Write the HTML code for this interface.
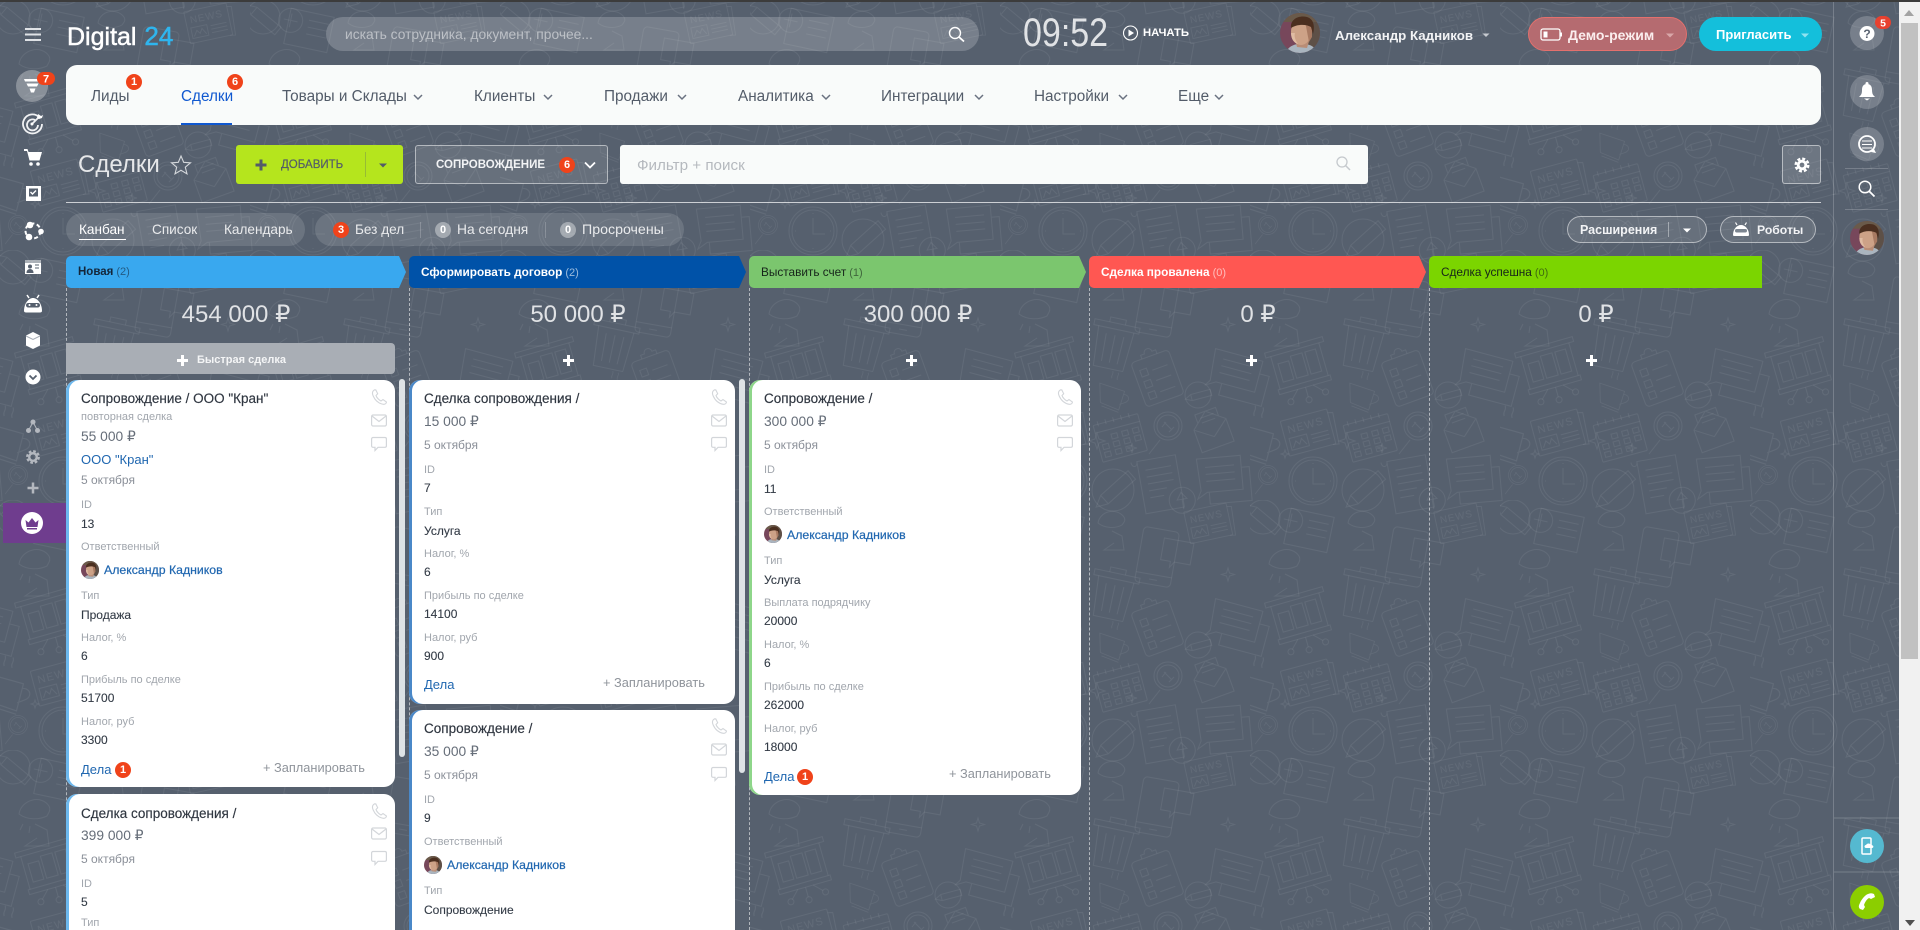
<!DOCTYPE html>
<html lang="ru">
<head>
<meta charset="utf-8">
<title>Сделки</title>
<style>
html,body{margin:0;padding:0;width:1920px;height:930px;overflow:hidden;background:#56606e}
body{position:relative;font-family:"Liberation Sans","DejaVu Sans",sans-serif;color:#fff}
.a,.t{position:absolute}
.t{white-space:nowrap;line-height:20px}
#bg{position:absolute;left:0;top:0}
#ic{position:absolute;left:0;top:0;pointer-events:none}
.badge{position:absolute;width:16px;height:16px;border-radius:50%;background:#f0431a;color:#fff;font-size:11px;font-weight:bold;line-height:16px;text-align:center}
.zero{position:absolute;width:16px;height:16px;border-radius:50%;background:rgba(255,255,255,.38);color:#fff;font-size:11px;font-weight:bold;line-height:16px;text-align:center}
.nav{font-size:15.3px;color:#535c69;top:87px}
.pill{position:absolute;background:rgba(255,255,255,.13);border-radius:17px;top:213px;height:33px}
.vt{font-size:13.6px;top:220px;color:rgba(255,255,255,.85)}
.oln{position:absolute;top:216px;height:25px;border:1px solid rgba(255,255,255,.5);background:rgba(255,255,255,.1);border-radius:14px}
.hd{position:absolute;top:256px;height:32px;border-radius:5px 0 0 5px;clip-path:polygon(0 0,calc(100% - 7px) 0,100% 50%,calc(100% - 7px) 100%,0 100%)}
.hd span{position:absolute;left:12px;top:6px;white-space:nowrap;line-height:20px;font-size:11.8px}
.hd i{font-style:normal;font-weight:normal;font-size:11px;opacity:.6;margin-left:3px}
.sum{position:absolute;top:298px;width:300px;text-align:center;font-size:24px;line-height:34px;color:rgba(255,255,255,.82)}
.dash{position:absolute;top:288px;bottom:0;width:0;border-left:1px dashed rgba(255,255,255,.55)}
.plus{position:absolute;width:11px;height:11px;top:355px;
 background:linear-gradient(#fff,#fff) center/11px 3px no-repeat,linear-gradient(#fff,#fff) center/3px 11px no-repeat}
.sb{position:absolute;width:6px;background:#dde2e5;border-radius:3px;top:379px}
.card{position:absolute;background:#fff;border-radius:11px;overflow:hidden}
.card .t{left:15px}
.ti{font-size:13.5px;color:#2f3640;-webkit-text-stroke:.15px #2f3640;margin-top:1px}
.pr{font-size:13.8px;color:#666e79}
.dt{font-size:12px;color:#8b9099}
.l{font-size:11px;color:#a1a6ad}
.v{font-size:12px;color:#333b46;-webkit-text-stroke:.1px #333b46}
.nm{font-size:12.3px;color:#2067b0;-webkit-text-stroke:.2px #2067b0}
.lnk{font-size:13px;color:#2067b0}
.pl{font-size:12.8px;color:#8f949b}
.cav{position:absolute;left:15px;width:18px;height:18px}
.ci{position:absolute;right:8px;width:16px;height:16px;overflow:visible}
.ci *{fill:none;stroke:#d3d6da;stroke-width:1.2}
</style>
</head>
<body>
<svg id="bg" width="1920" height="930" xmlns="http://www.w3.org/2000/svg">
<defs>
<g id="news"><rect x="-26" y="-18" width="48" height="36" rx="1"/><path d="M22-14l5 1-2 32-6-1"/><text x="-21" y="-4" font-size="11" letter-spacing="1" fill="#fff" fill-opacity=".065" stroke="none" font-family="Liberation Sans">NEWS</text><rect x="-22" y="1" width="18" height="12"/><path d="M-20 11l4-6 3 4 3-5 4 7M0 3h18M0 7h18M0 11h18"/></g>
<g id="pen"><path d="M-8 9l2-6L7-10l4 4L-2 7zM-6 3l4 4" vector-effect="non-scaling-stroke"/></g>
<g id="mag"><circle r="14"/><circle r="11"/><path d="M-8 14L-19 28"/><path d="M-4-4l8 8M-6 1l4-5M1 6l5-5"/></g>
<g id="cup"><path d="M-18-10L14-4 10 20-14 14zM13 0c8-1 10 7 3 10l-6 3M-12 18l22 5"/><path d="M-4-18c-2-4 2-5 0-9M3-17c-2-4 2-5 0-9"/></g>
<g id="tile" fill="none" stroke="#fff" stroke-opacity=".065" stroke-width="1">
<g transform="translate(63,231)"><circle r="24"/><circle r="21"/><path d="M0-13V3H12M0-18v1M0 18v-1M-18 0h1M18 0h-1"/></g>
<g transform="translate(113,95) rotate(12)"><rect x="-23" y="-22" width="46" height="6"/><path d="M-8-22v-5h16v5M-18-16l3 40h30l3-40M-9-10l1 28M0-10v28M9-10l-1 28"/></g>
<g transform="translate(50,118) rotate(-16)"><rect x="-30" y="-24" width="60" height="5"/><rect x="-27" y="15" width="54" height="5"/><path d="M-25-19v34M25-19v34"/><rect x="-20" y="-10" width="11" height="19"/><rect x="-6" y="-14" width="12" height="23"/><rect x="9" y="-14" width="11" height="23"/><path d="M-8 20l-8 8M0 20v10M8 20l8 8"/><circle cx="-18" cy="30" r="3"/><circle cx="0" cy="33" r="3"/><circle cx="18" cy="30" r="3"/></g>
<g transform="translate(157,127) rotate(-20)"><rect x="-20" y="-22" width="40" height="47" rx="4"/><path d="M-8-22v-4h4a4 4 0 0 1 8 0h4v4"/><rect x="-14" y="-12" width="7" height="7"/><rect x="-14" y="0" width="7" height="7"/><rect x="-14" y="12" width="7" height="7"/><path d="M-2-8h16M-2 3h16M-2 15h16"/></g>
<g transform="translate(237,123) rotate(15)"><path d="M-27-18H22V14H-18l-10 6 4-6zM22-5H32V26H-12V14"/><path d="M-17-10H14M-17-3H14M-17 4H14"/></g>
<g transform="translate(33,70)"><path d="M-14-6c2-14 22-20 30-8 2 4 0 6-2 10-8 4-20 4-28-2zM2 4l12 6 2 16H-8l12-8"/><path d="M-10 4l-3 6M-3 6l-1 7"/></g>
<g transform="translate(157,57) rotate(10)"><rect x="-18" y="-28" width="36" height="56" rx="4"/><path d="M-18 18H18M-4 23h8"/><path d="M4-20H34V2H18L14 8V2H4z"/></g>
<use href="#cup" transform="translate(113,143) rotate(8) scale(.8)"/>
<g transform="translate(198,145)"><circle r="13"/><use href="#pen" transform="scale(1.1) rotate(30)"/></g>
<g transform="translate(120,187) rotate(-15)"><rect x="-23" y="-18" width="46" height="38" rx="1"/><path d="M-23-10H23M-18-21v5M-10-21v5M-2-21v5M6-21v5M14-21v5"/><path d="M-8-5h6v5h-6zM3-5h6v5H3zM14-5h6v5h-6zM-19 3h6v5h-6zM-8 3h6v5h-6zM3 3h6v5H3zM14 3h6v5h-6zM-19 11h6v5h-6zM-8 11h6v5h-6zM3 11h6v5H3z"/></g>
<use href="#mag" transform="translate(168,176)"/>
<g transform="translate(212,180) rotate(-20)"><path d="M-17-6l17-14 17 14V18H-17zM-17-6L0 7 17-6M-11-11V-20H11V-11"/><path d="M-7-15H7M-7-10H7"/></g>
<use href="#cup" transform="translate(7,187) rotate(5) scale(1.15)"/>
<use href="#news" transform="translate(60,182) rotate(-15)"/>
<g transform="translate(165,233) rotate(-10)"><path d="M-24-26H15V27H-24zM-24-26c0 6-6 6-6 0M-17-16H9M-17-9H9M-17-2H9M-17 5H1M-17 12H-3"/><circle cx="14" cy="20" r="13"/><path d="M14 29V19h-5l5-7 5 7h-5"/></g>
<g transform="translate(222,227) rotate(-5)"><path d="M-24-20H20V14H-16L-26 20l4-8zM20-8H28V26H-14V14"/><path d="M-16-11H13M-16-4H13M-16 3H13"/></g>
<use href="#mag" transform="translate(18,225) scale(.68)"/>
<g transform="translate(113,240)"><circle r="21"/><use href="#pen" transform="scale(2) rotate(3)"/></g>
<use href="#news" transform="translate(210,23) rotate(-12) scale(.9)"/>
<g transform="translate(13,17)"><circle r="17"/><use href="#pen" transform="scale(1.7) rotate(85)"/></g>
<g transform="translate(57,30) rotate(12)"><rect x="-20" y="-18" width="44" height="36"/><circle cx="-18" cy="-6" r="12"/><path d="M-18-13v14M-25-6h14M0-10h20M0-3h20M0 4h20"/></g>
<g transform="translate(110,27)"><path d="M-12-4c2-12 18-16 26-6 2 4 0 5-2 8-7 4-18 3-24-2zM2 4l10 5 2 14H-6l10-7"/></g>
<path d="M97 183l2 6 6 2-6 2-2 6-2-6-6-2 6-2zM228 68l1.500 5 5 1.500-5 1.500-1.500 5-1.500-5-5-1.500 5-1.500zM132 193l1 4 4 1-4 1-1 4-1-4-4-1 4-1zM35 200l1 3 3 1-3 1-1 3-1-3-3-1 3-1z"/>
</g>
<pattern id="p" patternUnits="userSpaceOnUse" width="250" height="250">
<use href="#tile"/><use href="#tile" x="-250"/><use href="#tile" y="-250"/><use href="#tile" x="-250" y="-250"/>
</pattern>
<symbol id="av" viewBox="0 0 40 40">
<clipPath id="avc"><circle cx="20" cy="20" r="20"/></clipPath>
<g clip-path="url(#avc)">
<rect width="40" height="40" fill="#77475b"/><rect x="26" width="14" height="40" fill="#5d5047"/><rect width="40" height="9" fill="#6a5a4a"/>
<path d="M6 40c2-8 12-10 18-9 7 0 12 4 13 9z" fill="#aab5bf"/>
<path d="M15 26l2 8 10 1 3-10z" fill="#b98d76"/>
<ellipse cx="21" cy="19" rx="10" ry="13" fill="#cda287"/>
<path d="M11 20c0 6 3 10 7 11-3-4-4-8-3-11z" fill="#e0bca3"/>
<path d="M25 8l7 2v14l-3 5z" fill="#a87a62"/>
<path d="M11 15C10 6 19 2 27 4c7 2 8 10 6 17l-2-7c-5-3-14-3-20 1z" fill="#4b2f20"/>
</g>
</symbol>
<symbol id="phone" viewBox="0 0 16 16"><path d="M3.500.8C1.500 2 .8 4 2.200 7c2 4.500 5.500 7.500 10 8.300 1.700.2 3-.8 3.300-2.200l-3.500-2.600-2 1.500C8 11 5.500 8.500 5 6.500l1.700-1.700L4.800.9z" fill="none" stroke="#d3d6da" stroke-width="1.100"/></symbol>
<symbol id="mail" viewBox="0 0 16 16"><rect x=".6" y="2" width="14.800" height="11" rx="1.500" fill="none" stroke="#d3d6da" stroke-width="1.200"/><path d="M1 3l7 5.500L15 3" fill="none" stroke="#d3d6da" stroke-width="1.200"/></symbol>
<symbol id="chat" viewBox="0 0 16 16"><path d="M2 1.500h12c.8 0 1.400.6 1.400 1.400v7c0 .8-.6 1.400-1.400 1.400H7l-3 3.200v-3.200H2C1.200 11.300.6 10.700.6 9.900v-7C.6 2.100 1.200 1.500 2 1.500z" fill="none" stroke="#d3d6da" stroke-width="1.200"/></symbol>
</defs>
<rect width="1920" height="930" fill="#56606e"/>
<rect width="1920" height="930" fill="url(#p)"/>
<rect width="1920" height="2" fill="#3c3c3c"/>
<path d="M1833.500 2V930M1834 818H1899M1834 872H1899M1845 168.500H1888M1845 209.500H1888" stroke="#fff" stroke-opacity=".2" fill="none"/>
</svg>

<!-- верхняя панель -->
<div class="t" style="left:67px;top:21px;font-size:25px;line-height:30px;-webkit-text-stroke:.5px #fff">Digital <span style="color:#2fb5ee;-webkit-text-stroke:.5px #2fb5ee;font-size:26px;margin-left:1px">24</span></div>
<div class="a" style="left:326px;top:17px;width:653px;height:34px;border-radius:17px;background:rgba(255,255,255,.2)"></div>
<div class="t" style="left:345px;top:25px;font-size:13.800px;color:rgba(255,255,255,.5)">искать сотрудника, документ, прочее...</div>
<div class="t" style="left:1023px;top:10px;font-size:40px;line-height:46px;transform:scaleX(.85);transform-origin:0 0;color:rgba(255,255,255,.82)">09:52</div>
<div class="t" style="left:1143px;top:23px;font-size:11.300px;font-weight:bold">НАЧАТЬ</div>
<div class="t" style="left:1335px;top:26px;font-size:13.300px;font-weight:bold;color:#f2f3f5">Александр Кадников</div>
<div class="a" style="left:1528px;top:17px;width:157px;height:32px;border:1px solid #e4706d;border-radius:17px;background:#b56b70"></div>
<div class="t" style="left:1568px;top:25px;font-size:14px;font-weight:bold;color:#fbeeee">Демо-режим</div>
<div class="a" style="left:1699px;top:17px;width:123px;height:34px;border-radius:17px;background:#14bfdb"></div>
<div class="t" style="left:1716px;top:25px;font-size:13px;font-weight:bold">Пригласить</div>

<!-- меню -->
<div class="a" style="left:66px;top:65px;width:1755px;height:60px;background:#f9fbfa;border-radius:11px"></div>
<div class="t nav" style="left:91px">Лиды</div>
<div class="t nav" style="left:181px;color:#1058d0">Сделки</div>
<div class="a" style="left:181px;top:123px;width:51px;height:2px;background:#1058d0"></div>
<div class="t nav" style="left:282px">Товары и Склады</div>
<div class="t nav" style="left:474px">Клиенты</div>
<div class="t nav" style="left:604px">Продажи</div>
<div class="t nav" style="left:738px">Аналитика</div>
<div class="t nav" style="left:881px">Интеграции</div>
<div class="t nav" style="left:1034px">Настройки</div>
<div class="t nav" style="left:1178px">Еще</div>
<div class="badge" style="left:126px;top:74px">1</div>
<div class="badge" style="left:227px;top:74px">6</div>

<!-- заголовок -->
<div class="t" style="left:78px;top:150px;font-size:24px;line-height:30px;color:rgba(255,255,255,.85)">Сделки</div>
<div class="a" style="left:236px;top:145px;width:167px;height:39px;background:#b5e51d;border-radius:3px"></div>
<div class="a" style="left:365px;top:152px;width:1px;height:25px;background:rgba(83,92,105,.3)"></div>
<div class="t" style="left:281px;top:155px;font-size:11.500px;color:#535c69;-webkit-text-stroke:.2px #535c69">ДОБАВИТЬ</div>
<div class="a" style="left:415px;top:145px;width:191px;height:37px;border:1px solid rgba(255,255,255,.5);background:rgba(255,255,255,.1);border-radius:3px"></div>
<div class="t" style="left:436px;top:155px;font-size:11.500px;font-weight:bold;color:#f2f3f5">СОПРОВОЖДЕНИЕ</div>
<div class="badge" style="left:559px;top:157px">6</div>
<div class="a" style="left:620px;top:145px;width:748px;height:39px;background:#f9fbfa;border-radius:3px"></div>
<div class="t" style="left:637px;top:156px;font-size:15.200px;color:#b5b9be">Фильтр + поиск</div>
<div class="a" style="left:1782px;top:145px;width:37px;height:37px;border:1px solid rgba(255,255,255,.5);background:rgba(255,255,255,.14);border-radius:3px"></div>
<div class="a" style="left:66px;top:202px;width:1755px;height:1px;background:rgba(255,255,255,.7)"></div>

<!-- вид и счетчики -->
<div class="pill" style="left:66px;width:239px"></div>
<div class="t vt" style="left:79px;color:#fff">Канбан</div>
<div class="a" style="left:79px;top:239px;width:47px;height:1px;background:#fff"></div>
<div class="t vt" style="left:152px">Список</div>
<div class="t vt" style="left:224px">Календарь</div>
<div class="pill" style="left:315px;width:369px"></div>
<div class="badge" style="left:333px;top:222px">3</div>
<div class="t vt" style="left:355px">Без дел</div>
<div class="a" style="left:420px;top:222px;width:1px;height:16px;background:rgba(255,255,255,.2)"></div>
<div class="zero" style="left:435px;top:222px">0</div>
<div class="t vt" style="left:457px;font-size:13.800px">На сегодня</div>
<div class="a" style="left:545px;top:222px;width:1px;height:16px;background:rgba(255,255,255,.2)"></div>
<div class="zero" style="left:560px;top:222px">0</div>
<div class="t vt" style="left:582px;font-size:14.200px">Просрочены</div>
<div class="oln" style="left:1567px;width:138px"></div>
<div class="t" style="left:1580px;top:220px;font-size:12.500px;font-weight:bold;color:#f2f3f5">Расширения</div>
<div class="a" style="left:1668px;top:222px;width:1px;height:15px;background:rgba(255,255,255,.4)"></div>
<div class="oln" style="left:1720px;width:94px"></div>
<div class="t" style="left:1757px;top:220px;font-size:12.200px;font-weight:bold;color:#f2f3f5">Роботы</div>

<!-- канбан -->
<div class="dash" style="left:66px"></div><div class="dash" style="left:409px"></div><div class="dash" style="left:749px"></div><div class="dash" style="left:1089px"></div><div class="dash" style="left:1429px"></div>
<div class="hd" style="left:66px;width:340px;background:#39a8ef"><span style="color:#14263a;font-weight:bold;font-size:11.500px">Новая<i>(2)</i></span></div>
<div class="hd" style="left:409px;width:337px;background:#0052a8"><span style="color:#fff;font-weight:bold">Сформировать договор<i>(2)</i></span></div>
<div class="hd" style="left:749px;width:337px;background:#7bc66e"><span style="color:#16241a">Выставить счет<i>(1)</i></span></div>
<div class="hd" style="left:1089px;width:337px;background:#ff5752"><span style="color:#fff;font-weight:bold">Сделка провалена<i>(0)</i></span></div>
<div class="hd" style="left:1429px;width:333px;background:#7bd500;clip-path:none;border-radius:5px 0 0 5px"><span style="color:#16241a">Сделка успешна<i>(0)</i></span></div>
<div class="sum" style="left:86px">454 000 ₽</div>
<div class="sum" style="left:428px">50 000 ₽</div>
<div class="sum" style="left:768px">300 000 ₽</div>
<div class="sum" style="left:1108px">0 ₽</div>
<div class="sum" style="left:1446px">0 ₽</div>
<div class="a" style="left:66px;top:343px;width:329px;height:31px;background:#a9aeb5;border-radius:0 4px 4px 0"></div>
<div class="plus" style="left:177px;top:355px"></div>
<div class="t" style="left:197px;top:350px;font-size:11px;font-weight:bold;color:#f4f5f6">Быстрая сделка</div>
<div class="plus" style="left:563px"></div><div class="plus" style="left:906px"></div><div class="plus" style="left:1246px"></div><div class="plus" style="left:1586px"></div>
<div class="sb" style="left:399px;height:378px"></div>
<div class="sb" style="left:739px;height:394px"></div>

<!-- колонка 1 -->
<div class="card" style="left:66px;top:380px;width:329px;height:407px;box-shadow:inset 3px 0 0 #6cb8ee">
<svg class="ci" style="top:9px"><use href="#phone"/></svg><svg class="ci" style="top:33px"><use href="#mail"/></svg><svg class="ci" style="top:56px"><use href="#chat"/></svg>
<div class="t ti" style="top:8px">Сопровождение / ООО "Кран"</div>
<div class="t l" style="top:27px">повторная сделка</div>
<div class="t pr" style="top:47px">55 000 ₽</div>
<div class="t lnk" style="top:70px">ООО "Кран"</div>
<div class="t dt" style="top:90px">5 октября</div>
<div class="t l" style="top:115px">ID</div><div class="t v" style="top:134px">13</div>
<div class="t l" style="top:157px">Ответственный</div>
<svg class="cav" style="top:181px"><use href="#av"/></svg><div class="t nm" style="left:38px;top:180px">Александр Кадников</div>
<div class="t l" style="top:206px">Тип</div><div class="t v" style="top:225px">Продажа</div>
<div class="t l" style="top:248px">Налог, %</div><div class="t v" style="top:266px">6</div>
<div class="t l" style="top:290px">Прибыль по сделке</div><div class="t v" style="top:308px">51700</div>
<div class="t l" style="top:332px">Налог, руб</div><div class="t v" style="top:350px">3300</div>
<div class="t lnk" style="top:380px">Дела</div><div class="badge" style="left:49px;top:382px">1</div>
<div class="t pl" style="left:197px;top:378px">+ Запланировать</div>
</div>
<div class="card" style="left:66px;top:794px;width:329px;height:136px;border-radius:11px 11px 0 0;box-shadow:inset 3px 0 0 #6cb8ee">
<svg class="ci" style="top:9px"><use href="#phone"/></svg><svg class="ci" style="top:32px"><use href="#mail"/></svg><svg class="ci" style="top:56px"><use href="#chat"/></svg>
<div class="t ti" style="top:9px">Сделка сопровождения /</div>
<div class="t pr" style="top:32px">399 000 ₽</div>
<div class="t dt" style="top:55px">5 октября</div>
<div class="t l" style="top:80px">ID</div><div class="t v" style="top:98px">5</div>
<div class="t l" style="top:116px;margin-top:6px;line-height:14px">Тип</div>
</div>

<!-- колонка 2 -->
<div class="card" style="left:409px;top:380px;width:326px;height:324px;box-shadow:inset 3px 0 0 #4a88c8">
<svg class="ci" style="top:9px"><use href="#phone"/></svg><svg class="ci" style="top:33px"><use href="#mail"/></svg><svg class="ci" style="top:56px"><use href="#chat"/></svg>
<div class="t ti" style="top:8px">Сделка сопровождения /</div>
<div class="t pr" style="top:32px">15 000 ₽</div>
<div class="t dt" style="top:55px">5 октября</div>
<div class="t l" style="top:80px">ID</div><div class="t v" style="top:98px">7</div>
<div class="t l" style="top:122px">Тип</div><div class="t v" style="top:141px">Услуга</div>
<div class="t l" style="top:164px">Налог, %</div><div class="t v" style="top:182px">6</div>
<div class="t l" style="top:206px">Прибыль по сделке</div><div class="t v" style="top:224px">14100</div>
<div class="t l" style="top:248px">Налог, руб</div><div class="t v" style="top:266px">900</div>
<div class="t lnk" style="top:295px">Дела</div>
<div class="t pl" style="left:194px;top:293px">+ Запланировать</div>
</div>
<div class="card" style="left:409px;top:710px;width:326px;height:220px;border-radius:11px 11px 0 0;box-shadow:inset 3px 0 0 #4a88c8">
<svg class="ci" style="top:8px"><use href="#phone"/></svg><svg class="ci" style="top:32px"><use href="#mail"/></svg><svg class="ci" style="top:56px"><use href="#chat"/></svg>
<div class="t ti" style="top:8px">Сопровождение /</div>
<div class="t pr" style="top:32px">35 000 ₽</div>
<div class="t dt" style="top:55px">5 октября</div>
<div class="t l" style="top:80px">ID</div><div class="t v" style="top:98px">9</div>
<div class="t l" style="top:122px">Ответственный</div>
<svg class="cav" style="top:146px"><use href="#av"/></svg><div class="t nm" style="left:38px;top:145px">Александр Кадников</div>
<div class="t l" style="top:171px">Тип</div><div class="t v" style="top:190px">Сопровождение</div>
</div>

<!-- колонка 3 -->
<div class="card" style="left:749px;top:380px;width:332px;height:415px;box-shadow:inset 3px 0 0 #8ed68a">
<svg class="ci" style="top:9px"><use href="#phone"/></svg><svg class="ci" style="top:33px"><use href="#mail"/></svg><svg class="ci" style="top:56px"><use href="#chat"/></svg>
<div class="t ti" style="top:8px">Сопровождение /</div>
<div class="t pr" style="top:32px">300 000 ₽</div>
<div class="t dt" style="top:55px">5 октября</div>
<div class="t l" style="top:80px">ID</div><div class="t v" style="top:99px">11</div>
<div class="t l" style="top:122px">Ответственный</div>
<svg class="cav" style="top:145px"><use href="#av"/></svg><div class="t nm" style="left:38px;top:145px">Александр Кадников</div>
<div class="t l" style="top:171px">Тип</div><div class="t v" style="top:190px">Услуга</div>
<div class="t l" style="top:213px">Выплата подрядчику</div><div class="t v" style="top:231px">20000</div>
<div class="t l" style="top:255px">Налог, %</div><div class="t v" style="top:273px">6</div>
<div class="t l" style="top:297px">Прибыль по сделке</div><div class="t v" style="top:315px">262000</div>
<div class="t l" style="top:339px">Налог, руб</div><div class="t v" style="top:357px">18000</div>
<div class="t lnk" style="top:387px">Дела</div><div class="badge" style="left:48px;top:389px">1</div>
<div class="t pl" style="left:200px;top:384px">+ Запланировать</div>
</div>

<!-- фиолетовый блок -->
<div class="a" style="left:3px;top:503px;width:63px;height:40px;background:#6f3d8e"></div>

<!-- скроллбар -->
<div class="a" style="left:1899px;top:2px;width:21px;height:928px;background:#f1f1f1"></div>
<div class="a" style="left:1901px;top:23px;width:17px;height:636px;background:#c1c1c1"></div>
<div class="a" style="left:1904px;top:10px;width:0;height:0;border:5px solid transparent;border-top:0;border-bottom:6px solid #a3a3a3"></div>
<div class="a" style="left:1905px;top:920px;width:0;height:0;border:5px solid transparent;border-bottom:0;border-top:6px solid #505050"></div>

<!-- иконки -->
<svg id="ic" width="1920" height="930" xmlns="http://www.w3.org/2000/svg">
<!-- гамбургер -->
<path d="M25 29H41M25 34.500H41M25 40H41" stroke="#dfe2e6" stroke-width="2"/>
<!-- левое меню -->
<circle cx="32" cy="86" r="16" fill="#fff" fill-opacity=".3"/>
<path d="M24 79h17l-1 2.500H25zM26.500 83.500h12l-1.500 3H28zM29.500 88.500h6l-1.500 4h-3z" fill="#fff"/>
<rect x="37" y="72" width="18" height="13" rx="6.500" fill="#f0431a"/>
<text x="46" y="82.500" font-size="11" font-weight="bold" fill="#fff" text-anchor="middle">7</text>
<g fill="none" stroke="#f0f1f3" stroke-width="1.800"><path d="M39 117a9.500 9.500 0 1 0 3 7"/><path d="M35 120a5.500 5.500 0 1 0 3 5"/><path d="M32 124l7-7"/></g>
<circle cx="32" cy="124" r="1.500" fill="#fff"/><path d="M37 118l1-4 3 2 2-1-1 3-3 1z" fill="#fff"/>
<path d="M24 149h3.500l1 3H42l-2.500 8.500H29.500L27 151h-3z" fill="#fff"/><circle cx="31" cy="164" r="1.800" fill="#fff"/><circle cx="38" cy="164" r="1.800" fill="#fff"/>
<rect x="26" y="186" width="15" height="15" fill="#fff"/><rect x="29" y="188.500" width="9" height="8" fill="#56606e"/><path d="M30.500 192l2 2 3.500-3.500" stroke="#fff" stroke-width="1.400" fill="none"/>
<circle cx="33" cy="231" r="7.500" fill="none" stroke="#fff" stroke-width="2" stroke-dasharray="4 2.500"/>
<circle cx="30" cy="225" r="3.300" fill="#fff"/><circle cx="41" cy="231.500" r="2.800" fill="#fff"/><circle cx="29" cy="237" r="3.300" fill="#fff"/>
<path d="M25 261h16" stroke="#fff"/><rect x="25" y="262.500" width="16" height="11.500" fill="#fff"/><circle cx="30" cy="266.500" r="2" fill="#56606e"/><path d="M27 272.500c0-4 6-4 6 0zM35 265h4M35 268h4" fill="#56606e" stroke="#56606e"/>
<path d="M29 298l-2-3M37 298l2-3" stroke="#fff" stroke-width="1.500"/><path d="M24 311c0-8 5-13 9-13s9 5 9 13c0 1-1 1.500-2 1.500H26c-1 0-2-.5-2-1.500z" fill="#fff"/><rect x="26" y="303" width="14" height="4.500" rx="2.200" fill="#56606e"/><circle cx="29.500" cy="305" r="1" fill="#fff"/><circle cx="36.500" cy="305" r="1" fill="#fff"/>
<path d="M33 332l7 3.500v10L33 349l-7-3.500v-10z" fill="#fff"/><path d="M26 336l7 3.500 7-3.500" stroke="#a5acb5" fill="none"/>
<circle cx="33" cy="377" r="7.500" fill="#fff"/><path d="M29.500 375.500l3.500 3.500 3.500-3.500" stroke="#56606e" stroke-width="1.800" fill="none"/>
<g fill="#b4b8bf"><circle cx="33" cy="422" r="2.500"/><circle cx="28.500" cy="430.500" r="2.500"/><circle cx="37.500" cy="430.500" r="2.500"/></g><path d="M33 422l-4.500 8.500M33 422l4.500 8.500" stroke="#b4b8bf"/>
<circle cx="33" cy="457" r="3.800" fill="none" stroke="#b4b8bf" stroke-width="2.400"/><circle cx="33" cy="457" r="5.800" fill="none" stroke="#b4b8bf" stroke-width="2.200" stroke-dasharray="2.700 1.850"/>
<path d="M33 482.500v11M27.500 488h11" stroke="#b4b8bf" stroke-width="2.500"/>
<circle cx="32" cy="523" r="11" fill="#fff"/><path d="M25.500 520l3 2.500 3.500-4.500 3.500 4.500 3-2.500-1 7h-11zM27 528h10v1.500H27z" fill="#6f3d8e"/>
<!-- поиск верх -->
<circle cx="955" cy="33" r="5.500" fill="none" stroke="#fff" stroke-width="1.400"/><path d="M959 37l5 4.500" stroke="#fff" stroke-width="1.800"/>
<circle cx="1130.500" cy="33" r="7" fill="none" stroke="#fff" stroke-width="1.100"/><path d="M1128.500 29.500l5.500 3.500-5.500 3.500z" fill="#fff"/>
<!-- аватар -->
<use href="#av" x="1280" y="13" width="40" height="40"/>
<path d="M1482.500 33.500h7l-3.500 3.500z" fill="#c6cad0"/>
<!-- демо -->
<rect x="1541" y="29" width="19" height="11" rx="2" fill="none" stroke="#fff" stroke-width="1.300"/><rect x="1543.500" y="31.500" width="4" height="6" fill="#fff"/><rect x="1560.500" y="32.500" width="1.500" height="4" fill="#fff"/>
<path d="M1666 33.500h8l-4 4z" fill="#d9a7a9"/><path d="M1801 33.500h8l-4 4z" fill="#8fe3f0"/>
<!-- меню шевроны -->
<g fill="none" stroke="#6a7280" stroke-width="1.500"><path d="M414 95l4 4 4-4M544 95l4 4 4-4M678 95l4 4 4-4M822 95l4 4 4-4M975 95l4 4 4-4M1119 95l4 4 4-4M1215 95l4 4 4-4"/></g>
<!-- звезда -->
<path d="M181 156l2.700 6.300 6.800.5-5.200 4.400 1.700 6.600-6-3.500-6 3.500 1.700-6.600-5.200-4.400 6.800-.5z" fill="none" stroke="#d5d8dc" stroke-width="1.100"/>
<!-- добавить -->
<path d="M261 159.500v11M255.500 165h11" stroke="#535c69" stroke-width="3"/><path d="M379 163.500h8l-4 4z" fill="#535c69"/>
<path d="M585 162.500l5 5 5-5" stroke="#fff" stroke-width="1.800" fill="none"/>
<circle cx="1342" cy="162" r="5" fill="none" stroke="#c5c9cd" stroke-width="1.300"/><path d="M1345.500 165.500l4.500 4.500" stroke="#c5c9cd" stroke-width="1.500"/>
<!-- шестерня -->
<circle cx="1802" cy="165" r="3.800" fill="none" stroke="#fff" stroke-width="2.800"/><circle cx="1802" cy="165" r="6.300" fill="none" stroke="#fff" stroke-width="2.400" stroke-dasharray="3 1.950"/>
<!-- расширения / роботы -->
<path d="M1683 228.500h8l-4 4z" fill="#fff"/>
<path d="M1737 225l-1.500-2.500M1745 225l1.500-2.500" stroke="#fff" stroke-width="1.200"/><path d="M1733 235c0-6 4-10 8-10s8 4 8 10c0 1-1 1-2 1h-12c-1 0-2 0-2-1z" fill="#fff"/><rect x="1735" y="229" width="12" height="3.500" rx="1.700" fill="#7c8590"/>
<!-- правая панель -->
<circle cx="1867" cy="33" r="17" fill="#fff" fill-opacity=".2"/><circle cx="1867" cy="33.500" r="7.500" fill="#fff"/>
<text x="1867" y="38" font-size="12" font-weight="bold" fill="#5b6472" text-anchor="middle">?</text>
<rect x="1875" y="16" width="16" height="13" rx="6.500" fill="#e8412f"/><text x="1883" y="26.500" font-size="10.500" font-weight="bold" fill="#fff" text-anchor="middle">5</text>
<circle cx="1867" cy="92" r="17" fill="#fff" fill-opacity=".2"/><path d="M1867 84c4 0 5 3 5 6 0 4 1 5 3 7h-16c2-2 3-3 3-7 0-3 1-6 5-6z" fill="#fff"/><circle cx="1867" cy="83.500" r="1.500" fill="#fff"/><path d="M1864 98.500h6l-3 2z" fill="#fff"/>
<circle cx="1867" cy="144" r="17" fill="#fff" fill-opacity=".2"/><circle cx="1867" cy="144" r="8" fill="none" stroke="#fff" stroke-width="1.800"/><path d="M1874 149l2 4-5-1z" fill="#fff"/><path d="M1862 141h10M1862 144.500h10M1862 148h10" stroke="#fff"/>
<circle cx="1865" cy="187" r="5.800" fill="none" stroke="#fff" stroke-width="1.500"/><path d="M1869 191l5.500 5.500" stroke="#fff" stroke-width="1.800"/>
<use href="#av" x="1850" y="221" width="34" height="34"/>
<circle cx="1867" cy="846" r="17" fill="#55b9d0"/><rect x="1862" y="838" width="9" height="16" rx="1" fill="none" stroke="#fff" stroke-width="1.500"/><path d="M1866 848c-2 0-2-3 0-3 1-2 4-2 5 0 3 0 3 3 1 3z" fill="#fff"/>
<circle cx="1867" cy="902" r="17" fill="#8cce00"/><path d="M1860 909c-2-2-1-4 0-6 1-3 5-8 8-9 2-1 4-1 6 0l1 3-4 2-2-1c-2 1-4 4-5 7l1 2-2 3z" fill="#fff"/>
</svg>
</body>
</html>
